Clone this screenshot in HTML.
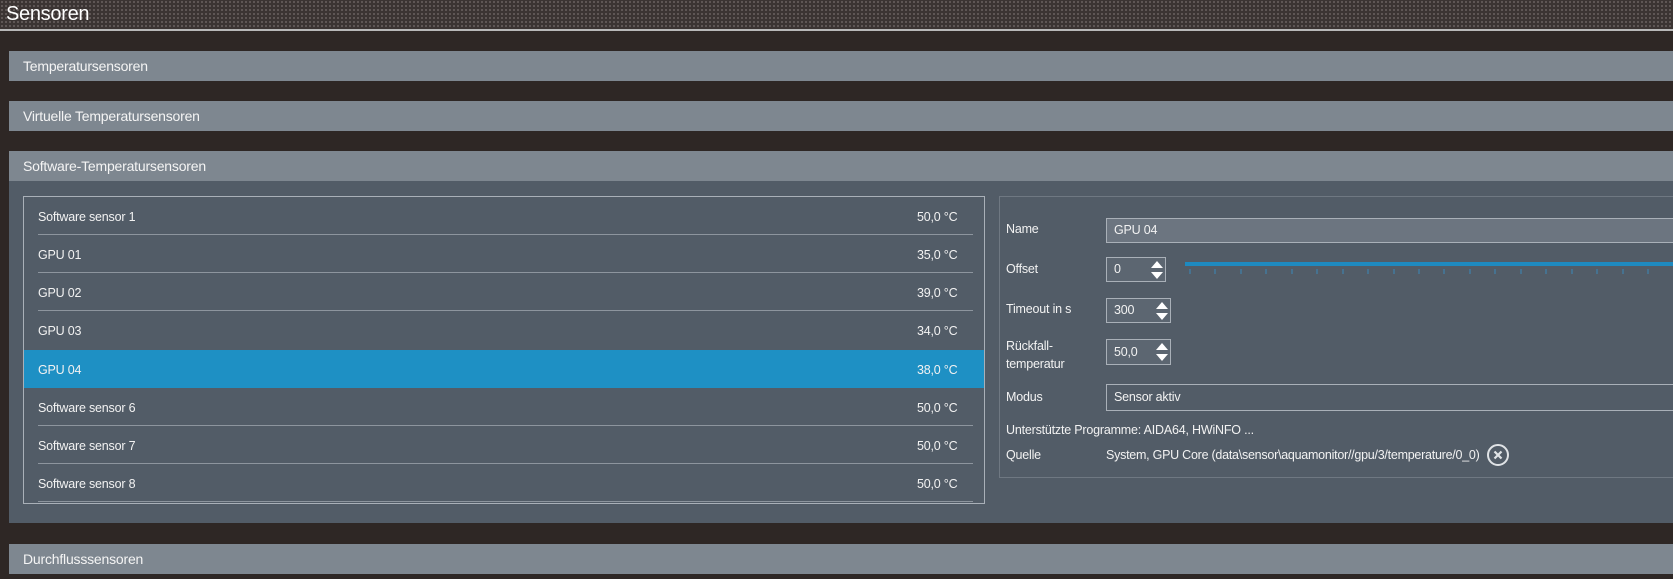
<!DOCTYPE html>
<html><head><meta charset="utf-8"><style>
*{margin:0;padding:0;box-sizing:border-box}
body{width:1673px;height:579px;overflow:hidden;background:#2e2725;font-family:"Liberation Sans",sans-serif;color:#fff;position:relative}
.hdr{position:absolute;left:0;top:0;width:1673px;height:29px;background-color:#3b3433;background-image:radial-gradient(#6a6160 0.8px,transparent 1px);background-size:4px 4px}
.hdr span{position:absolute;left:6px;top:3px;font-size:20px;color:#fff;letter-spacing:-0.3px}
.hl{position:absolute;left:0;top:29px;width:1673px;height:2px;background:#b8b8b8}
.bar{position:absolute;left:9px;width:1664px;height:30px;background:#7e8790;font-size:14px;line-height:30px;padding-left:14px;color:#f4f4f4;letter-spacing:-0.2px}
.body{position:absolute;left:9px;top:181px;width:1664px;height:342px;background:#525c67}
.list{position:absolute;left:23px;top:196px;width:962px;height:308px;border:1px solid #a9b0b8}
.row{position:absolute;left:14px;width:935px;height:38px;font-size:12.5px;line-height:40px;color:#f2f2f2;border-bottom:1px solid #8d959e;letter-spacing:-0.2px}
.row .v{position:absolute;left:879px;top:0}
.sel{background:#1e90c4;left:0;width:960px;padding-left:14px;border-bottom:none}
.sel .v{left:893px}
.rp{position:absolute;left:999px;top:196px;width:680px;height:282px;border:1px solid #6f7882}
.lbl{position:absolute;left:1006px;font-size:12.5px;color:#f2f2f2;letter-spacing:-0.2px}
.inp{position:absolute;left:1106px;border:1px solid #a9b0b8;background:#6c7580;font-size:12.5px;color:#f2f2f2;padding-left:7px;letter-spacing:-0.2px}
</style></head><body>
<div class="hdr"><span>Sensoren</span></div><div class="hl"></div>
<div class="bar" style="top:51px">Temperatursensoren</div>
<div class="bar" style="top:101px">Virtuelle Temperatursensoren</div>
<div class="bar" style="top:151px">Software-Temperatursensoren</div>
<div class="body"></div>
<div class="bar" style="top:544px">Durchflusssensoren</div>
<div class="list">
<div class="row" style="top:0">Software sensor 1<span class="v">50,0 °C</span></div>
<div class="row" style="top:38px">GPU 01<span class="v">35,0 °C</span></div>
<div class="row" style="top:76px">GPU 02<span class="v">39,0 °C</span></div>
<div class="row" style="top:114px;border-bottom:none">GPU 03<span class="v">34,0 °C</span></div>
<div class="row sel" style="top:153px">GPU 04<span class="v">38,0 °C</span></div>
<div class="row" style="top:191px">Software sensor 6<span class="v">50,0 °C</span></div>
<div class="row" style="top:229px">Software sensor 7<span class="v">50,0 °C</span></div>
<div class="row" style="top:267px">Software sensor 8<span class="v">50,0 °C</span></div>
</div>
<div class="rp"></div>
<div class="lbl" style="top:222px">Name</div>
<div class="inp" style="top:218px;width:580px;height:25px;line-height:23px">GPU 04</div>
<div class="lbl" style="top:262px">Offset</div>
<div class="inp" style="top:257px;width:60px;height:25px;line-height:23px;background:#5c6671">0</div>
<svg style="position:absolute;left:1150px;top:259px" width="14" height="22"><path d="M1 9 L7 2 L13 9Z M1 13 L7 20 L13 13Z" fill="#fff"/></svg>
<div style="position:absolute;left:1185px;top:262px;width:488px;height:4px;background:#1e8ac0"></div>
<svg style="position:absolute;left:1185px;top:269px" width="488" height="6"><g stroke="#3b88b8" stroke-width="1">
<line x1="5" y1="0" x2="5" y2="5"/><line x1="30" y1="0" x2="30" y2="5"/><line x1="56" y1="0" x2="56" y2="5"/><line x1="81" y1="0" x2="81" y2="5"/><line x1="107" y1="0" x2="107" y2="5"/><line x1="132" y1="0" x2="132" y2="5"/><line x1="158" y1="0" x2="158" y2="5"/><line x1="183" y1="0" x2="183" y2="5"/><line x1="209" y1="0" x2="209" y2="5"/><line x1="234" y1="0" x2="234" y2="5"/><line x1="259" y1="0" x2="259" y2="5"/><line x1="285" y1="0" x2="285" y2="5"/><line x1="310" y1="0" x2="310" y2="5"/><line x1="336" y1="0" x2="336" y2="5"/><line x1="361" y1="0" x2="361" y2="5"/><line x1="387" y1="0" x2="387" y2="5"/><line x1="412" y1="0" x2="412" y2="5"/><line x1="438" y1="0" x2="438" y2="5"/><line x1="463" y1="0" x2="463" y2="5"/></g></svg>
<div class="lbl" style="top:302px">Timeout in s</div>
<div class="inp" style="top:298px;width:65px;height:25px;line-height:23px;background:#5c6671">300</div>
<svg style="position:absolute;left:1155px;top:300px" width="14" height="22"><path d="M1 9 L7 2 L13 9Z M1 13 L7 20 L13 13Z" fill="#fff"/></svg>
<div class="lbl" style="top:337px;line-height:18px">Rückfall-<br>temperatur</div>
<div class="inp" style="top:339px;width:65px;height:26px;line-height:24px;background:#5c6671">50,0</div>
<svg style="position:absolute;left:1155px;top:341px" width="14" height="22"><path d="M1 9 L7 2 L13 9Z M1 13 L7 20 L13 13Z" fill="#fff"/></svg>
<div class="lbl" style="top:390px">Modus</div>
<div class="inp" style="top:384px;width:580px;height:27px;line-height:24px;background:#525c67">Sensor aktiv</div>
<div class="lbl" style="top:423px">Unterstützte Programme: AIDA64, HWiNFO ...</div>
<div class="lbl" style="top:448px">Quelle</div>
<div class="lbl" style="top:448px;left:1106px;letter-spacing:-0.25px;font-size:12.5px">System, GPU Core (data\sensor\aquamonitor//gpu/3/temperature/0_0)</div>
<svg style="position:absolute;left:1486px;top:443px" width="24" height="24"><circle cx="12" cy="12" r="10" fill="none" stroke="#e0e3e6" stroke-width="2"/><path d="M8.5 8.5 L15.5 15.5 M15.5 8.5 L8.5 15.5" stroke="#e0e3e6" stroke-width="2.2"/></svg>
</body></html>
